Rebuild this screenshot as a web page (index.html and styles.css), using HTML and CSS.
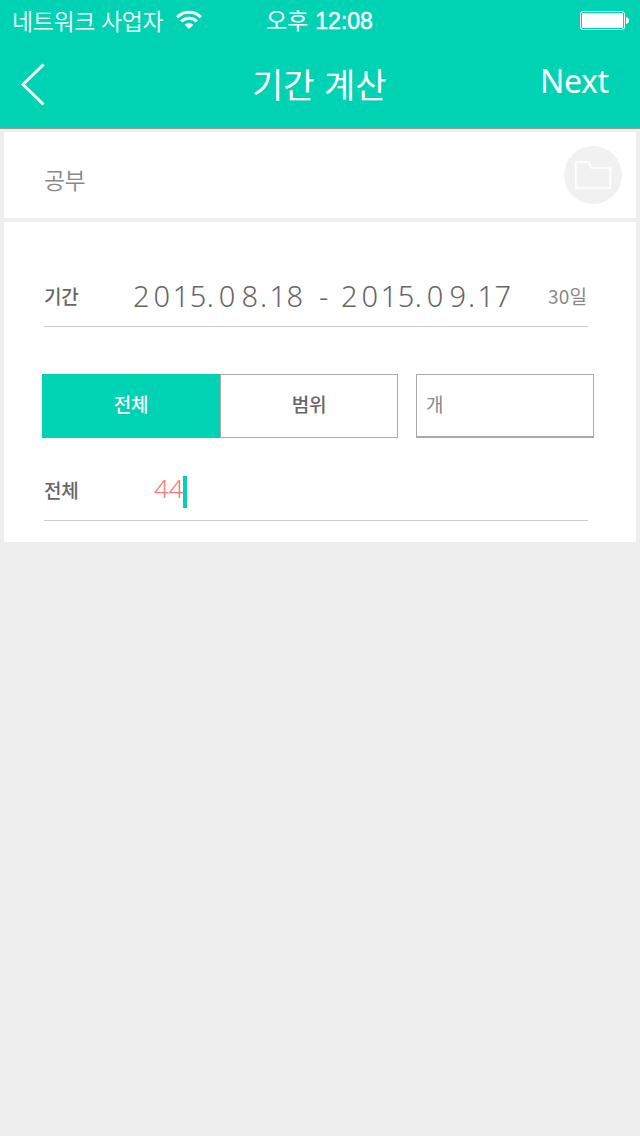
FILE: index.html
```html
<!DOCTYPE html>
<html lang="ko">
<head>
<meta charset="utf-8">
<title>기간 계산</title>
<link rel="stylesheet" href="styles.css">
</head>
<body>
<header class="header">
  <div class="status">
    <div class="carrier"><span class="carrier-name">네트워크 사업자</span>
      <svg class="wifi" width="26" height="20" viewBox="0 0 26 20"><g fill="none" stroke="#fff" stroke-width="3"><path d="M1.200 7.200a16.600 16.600 0 0 1 23.600 0"/><path d="M5.300 11.500a10.800 10.800 0 0 1 15.400 0"/></g><path d="M13 19l-4.300-4.300a6.100 6.100 0 0 1 8.600 0z" fill="#fff"/></svg>
    </div>
    <div class="clock"><span class="meridiem">오후</span><span class="time">12:08</span></div>
    <svg class="battery" width="50" height="20" viewBox="0 0 50 20"><rect x=".5" y="1.500" width="44" height="18" rx="2.500" fill="none" stroke="#fff"/><rect x="2" y="3" width="41" height="15" rx="1" fill="#fff"/><path d="M46 7q3 .5 3 3.500t-3 3.500z" fill="#fff"/></svg>
  </div>
  <nav class="nav">
    <svg class="back" width="26" height="44" viewBox="0 0 26 44"><path d="M23.500 2.500L3 22.500l20.500 20" fill="none" stroke="#fff" stroke-width="3"/></svg>
    <h1 class="title">기간 계산</h1>
    <span class="next">Next</span>
  </nav>
</header>
<main class="content">
  <section class="card subject">
    <span class="subject-name">공부</span>
    <svg class="folder" width="58" height="58" viewBox="0 0 58 58"><circle cx="29" cy="29" r="29" fill="#f1f1f1"/><path d="M11.800 16h13l2.500 6h19v20H11.800z" fill="none" stroke="#fff" stroke-width="1.600"/></svg>
  </section>
  <section class="card form">
    <div class="row period">
      <span class="label">기간</span>
      <span class="dates"><span class="date"><span class="year"><i>2</i><i>0</i>15</span><span class="month">.<i>0</i><i>8</i></span><span class="day">.<i>1</i>8</span></span><span class="dash">-</span><span class="date"><span class="year"><i>2</i><i>0</i>15</span><span class="month">.<i>0</i><i>9</i></span><span class="day">.<i>1</i>7</span></span></span>
      <span class="days">30일</span>
    </div>
    <div class="controls">
      <div class="segments"><div class="segment active">전체</div><div class="segment">범위</div></div>
      <div class="unit">개</div>
    </div>
    <div class="row total">
      <span class="label">전체</span>
      <span class="amount">44</span><span class="caret"></span>
    </div>
  </section>
</main>
</body>
</html>
```

FILE: styles.css
```css
* { box-sizing: border-box; }
body { margin: 0; height: 1136px; background: #eee; color: #666; font-family: "Noto Sans CJK KR", sans-serif; }
svg { display: block; flex: none; }
.header { height: 129px; background: #00d2b4; border-bottom: 1px solid #999; color: #fff; }
.status { height: 40px; padding: 0 10px 0 12px; display: grid; grid-template-columns: 254px 1fr 50px; grid-template-rows: 40px; align-items: center; }
.carrier { display: flex; align-items: center; gap: 12px; }
.carrier-name { width: 152px; white-space: nowrap; font-size: 23px; font-weight: 350; letter-spacing: -.4px; line-height: 34px; }
.clock { height: 40px; display: flex; gap: 7px; font-size: 23px; font-weight: 400; line-height: 38px; }
.time { font-family: "Liberation Sans", sans-serif; -webkit-text-stroke: .5px #fff; line-height: 42px; }
.nav { height: 88px; padding: 0 32px 0 20px; display: grid; grid-template-columns: 232px 1fr 68px; align-items: center; }
.title { margin: 0; font-size: 34px; font-weight: 400; line-height: 87px; height: 88px; white-space: nowrap; }
.next { font: 32px/82px "Noto Sans", sans-serif; letter-spacing: -.4px; align-self: start; }
.content { padding: 3px 4px; display: grid; gap: 4px; }
.card { background: #fff; }
.subject { height: 86px; padding: 14px 14px 14px 40px; display: flex; justify-content: space-between; }
.subject-name { font-size: 23px; font-weight: 350; line-height: 66px; letter-spacing: -.6px; color: #888; }
.form { height: 320px; padding: 44px 42px 21px 38px; }
.row { margin: 0 6px 0 2px; display: flex; border-bottom: 1px solid #ccc; white-space: nowrap; }
.period { height: 61px; }
.label { width: 89px; font-size: 19px; font-weight: 500; line-height: 60px; letter-spacing: -.3px; }
.dates { width: 415px; display: flex; font: 300 29px/59px "Noto Sans", sans-serif; }
.date { width: 207px; display: flex; }
.dates i { font-style: normal; }
.year, .month, .day { letter-spacing: .5px; }
.year i:first-child { margin-right: 3.5px; }
.year i + i { margin-right: 2px; }
.month i:first-child { margin: 0 5.5px 0 4.500px; }
.month i + i { margin-right: 1.500px; }
.day i { margin-left: 2px; }
.date:first-child { width: 186px; }
.dash { width: 22px; }
.days { font-size: 19px; line-height: 59px; letter-spacing: .2px; color: #888; }
.controls { height: 64px; margin-top: 47px; display: flex; gap: 18px; }
.segments { width: 356px; display: flex; font-size: 19px; font-weight: 500; line-height: 58px; letter-spacing: -.3px; text-align: center; }
.segment { width: 178px; border: 1px solid #aaa; }
.active { background: #00d2b4; border-color: #00d2b4; color: #fff; }
.unit { width: 178px; padding-left: 9px; border: 1px solid #aaa; border-bottom: 2px solid #aaa; font-size: 19px; line-height: 58px; color: #888; }
.total { height: 45px; margin-top: 38px; }
.total .label { width: 110px; line-height: 28px; }
.amount { width: 29px; font: 300 26px/25px "Noto Sans", sans-serif; color: #ff7777; }
.caret { width: 4px; height: 32px; background: #00d2b4; }
```
